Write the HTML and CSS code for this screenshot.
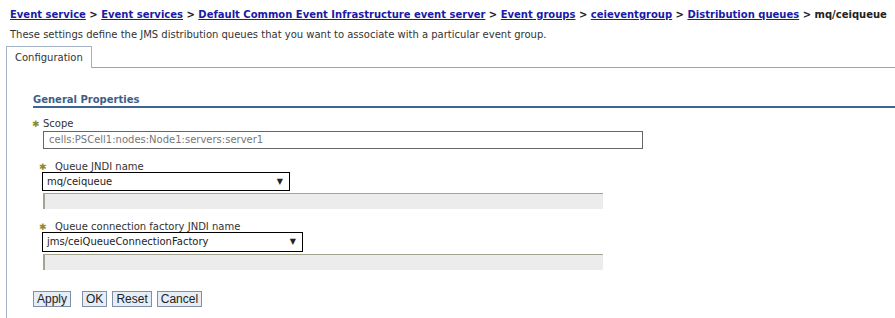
FILE: index.html
```html
<!DOCTYPE html>
<html lang="en">
<head>
    <meta charset="UTF-8">
    <title>Distribution queues - mq/ceiqueue</title>
    <link rel="stylesheet" href="styles.css">
</head>
<body>

<div class="crumbs">
    <a href="#">Event service</a> &gt; <a href="#">Event services</a> &gt;
    <a href="#">Default Common Event Infrastructure event server</a> &gt;
    <a href="#">Event groups</a> &gt; <a href="#">ceieventgroup</a> &gt;
    <a href="#">Distribution queues</a> &gt; mq/ceiqueue
</div>
<p class="intro">These settings define the JMS distribution queues that you want to associate with a particular event group.</p>

<div class="tabs">
    <div class="tab">Configuration</div>
    <div class="tab-rest"></div>
</div>

<div class="panel">
    <h2 class="section">General Properties</h2>

    <div class="field scope">
        <label><span class="req">&#10033;</span>Scope</label>
        <div class="readonly">cells:PSCell1:nodes:Node1:servers:server1</div>
    </div>

    <div class="field">
        <label><span class="req">&#10033;</span>Queue JNDI name</label>
        <div class="select sel-short">mq/ceiqueue<span class="arrow">&#9660;</span></div>
        <div class="blank"></div>
    </div>

    <div class="field">
        <label><span class="req">&#10033;</span>Queue connection factory JNDI name</label>
        <div class="select sel-long">jms/ceiQueueConnectionFactory<span class="arrow">&#9660;</span></div>
        <div class="blank"></div>
    </div>

    <div class="buttons">
        <button class="first">Apply</button>
        <button>OK</button>
        <button>Reset</button>
        <button>Cancel</button>
    </div>
</div>

</body>
</html>
```

FILE: styles.css
```css
body {
    margin: 0;
    font-family: "DejaVu Sans", Verdana, sans-serif;
    font-size: 10px;
    color: #333;
    background-color: #fff;
}

.crumbs {
    padding: 9px 10px 0;
    font-weight: bold;
    font-size: 10px;
    color: #222;
    white-space: nowrap;
}

.crumbs a {
    color: #1a1aa6;
}

.intro {
    margin: 9px 10px 0;
    font-size: 10px;
}

.tabs {
    display: flex;
    margin: 6px 0 0 6px;
}

.tab {
    border: 1px solid #a4b3c8;
    border-bottom: none;
    padding: 5px 8px 5px 8px;
    font-size: 10px;
    background-color: #fff;
}

.tab-rest {
    flex: 1;
    border-bottom: 1px solid #93a5be;
}

.panel {
    margin-left: 6px;
    border-left: 1px solid #a4b3c8;
    padding: 26px 0 14px 26px;
}

.section {
    margin: 0 0 10px;
    font-size: 10px;
    font-weight: bold;
    color: #3d5f86;
    border-bottom: 2px solid #3f6490;
    padding-bottom: 1px;
}

.field {
    margin-bottom: 12px;
}

/* keep the label text above the select box that follows it */
.field label {
    position: relative;
    display: block;
    margin: 0 0 -1px 6px;
    line-height: 12px;
}

.scope {
    margin-bottom: 12px;
}

.scope label {
    margin: 0 0 1px -1px;
}

.req {
    display: inline-block;
    width: 16px;
    color: #8c8a2a;
    font-size: 9px;
}

.scope .req {
    width: 11px;
}

.readonly {
    width: 588px;
    margin-left: 10px;
    border: 1px solid #666;
    padding: 2px 5px;
    color: #777;
    height: 12px;
    line-height: 12px;
}

.select {
    display: flex;
    justify-content: space-between;
    margin-left: 9px;
    border: 1px solid #000;
    padding: 2px 6px 2px 4px;
    height: 13px;
    line-height: 13px;
    color: #222;
}

.sel-short {
    width: 236px;
}

.sel-long {
    width: 249px;
    height: 14px;
    line-height: 14px;
}

.arrow {
    font-size: 8px;
}

.blank {
    width: 558px;
    height: 15px;
    margin: 2px 0 0 10px;
    background-color: #ececec;
    border-top: 1px solid #a3a38f;
    border-left: 2px solid #a3a38f;
}

.buttons {
    margin-top: 21px;
    display: flex;
    gap: 5px;
}

button {
    font-family: "Liberation Sans", Arial, sans-serif;
    font-size: 12px;
    background-color: #e6edf6;
    border: 1px solid #7f8fa6;
    padding: 0 3px;
    color: #222;
}

.first {
    margin-right: 6px;
}
```
